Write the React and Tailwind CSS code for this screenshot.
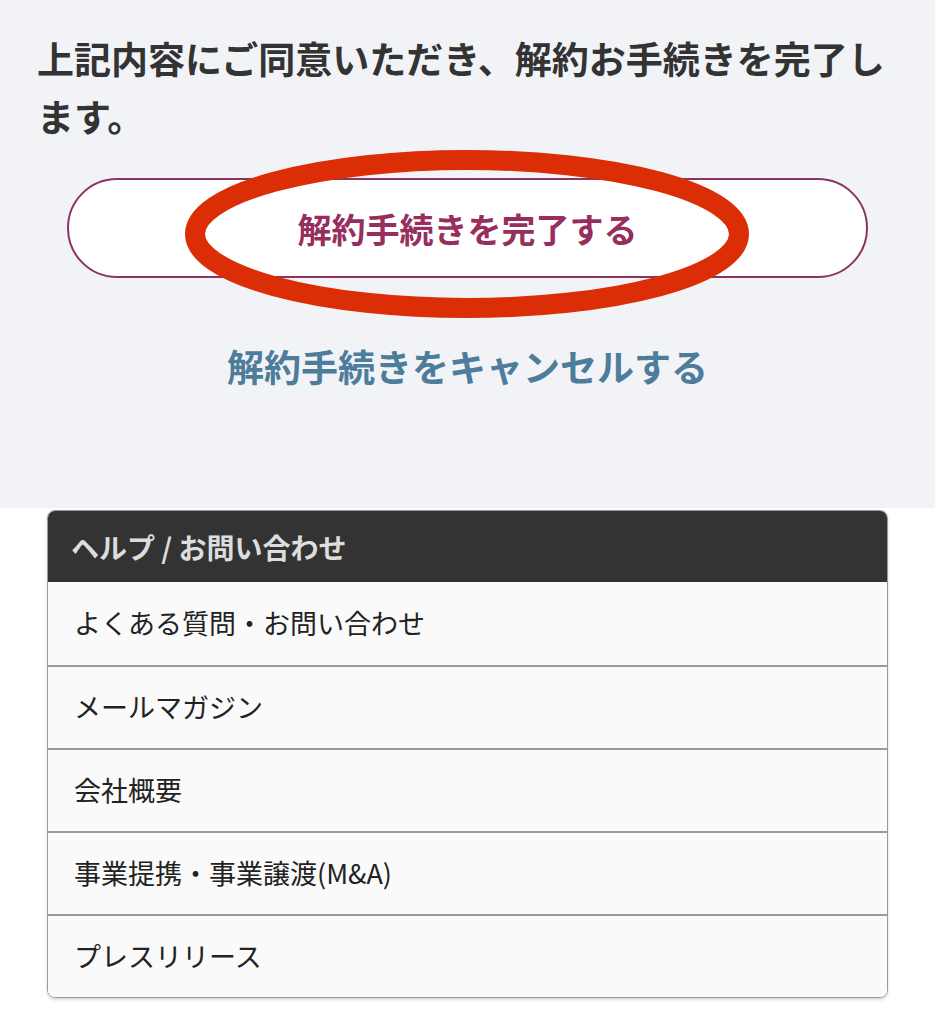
import React from 'react'

const links = [
  'よくある質問・お問い合わせ',
  'メールマガジン',
  '会社概要',
  '事業提携・事業譲渡(M&A)',
  'プレスリリース',
]

export default function App() {
  return (
    <div className="min-h-screen bg-white font-['Noto_Sans_CJK_JP','Noto_Sans',sans-serif]">
      {/* 解約確認 */}
      <section className="relative bg-[#f2f3f7] px-[37px] pt-[29px] pb-[112px]">
        <p className="text-[37px] leading-[58px] font-bold text-[#333]">
          上記内容にご同意いただき、解約お手続きを完了します。
        </p>

        <button className="mt-[33px] mx-[30px] w-[801px] h-[100px] rounded-full border-2 border-[#8a3560] bg-white flex items-center justify-center text-[34px] font-bold text-[#962e5e]">
          解約手続きを完了する
        </button>

        <div className="mt-[58px] text-center text-[37px] leading-[60px] font-bold text-[#4d7d9a]">
          解約手続きをキャンセルする
        </div>

        {/* 注釈の赤丸 */}
        <svg
          className="absolute left-[185px] top-[150px] pointer-events-none"
          width="564"
          height="168"
          viewBox="0 0 564 168"
        >
          <ellipse cx="282" cy="84" rx="272" ry="74" fill="none" stroke="#dc2e06" strokeWidth="20" />
        </svg>
      </section>

      {/* ヘルプ */}
      <div className="mx-[47px] mt-[2px] rounded-[8px] border border-[#999] overflow-hidden shadow-[0_2px_3px_rgba(0,0,0,0.15)]">
        <div className="h-[71px] bg-[#333] flex items-center px-[23px] text-[28px] font-bold text-[#ddd]">
          ヘルプ / お問い合わせ
        </div>
        {links.map((label, i) => (
          <div
            key={label}
            className={`h-[83px] bg-[#fafafa] flex items-center px-[26px] text-[27px] text-[#222] ${i > 0 ? 'border-t-[2px] border-[#9a9a9a]' : ''}`}
          >
            {label}
          </div>
        ))}
      </div>
    </div>
  )
}
